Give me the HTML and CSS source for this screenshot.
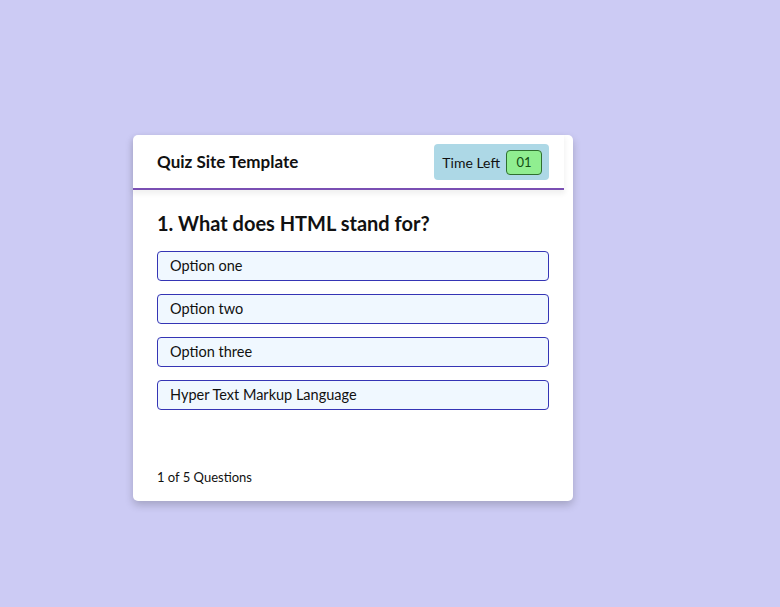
FILE: index.html
```html
<!DOCTYPE html>
<html lang="en">

<head>
    <meta charset="UTF-8">
    <meta name="viewport" content="width=device-width, initial-scale=1.0">
    <title>Quiz Site Template</title>
    <link rel="stylesheet" href="styles.css">
</head>

<body>
    <div class="quiz-box">
        <header class="quiz-header">
            <div class="title">Quiz Site Template</div>
            <div class="timer">
                <div class="time-text">Time Left</div>
                <div class="time-sec">01</div>
            </div>
        </header>
        <section class="quiz-body">
            <div class="que-text">1. What does HTML stand for?</div>
            <div class="option-list">
                <div class="option">Option one</div>
                <div class="option">Option two</div>
                <div class="option">Option three</div>
                <div class="option">Hyper Text Markup Language</div>
            </div>
        </section>
        <footer class="quiz-footer">
            <span><b>1</b> of <b>5</b> Questions</span>
        </footer>
    </div>
</body>

</html>
```

FILE: styles.css
```css
* {
    margin: 0;
    padding: 0;
    box-sizing: border-box;
}

body {
    background: #cccbf4;
    font-family: "Lato", "Open Sans", sans-serif;
    height: 607px;
    padding-top: 135px;
    padding-left: 133px;
}

.quiz-box {
    width: 440px;
    height: 366px;
    background: #fff;
    border-radius: 5px;
    box-shadow: 0 4px 8px rgba(0, 0, 0, 0.2);
    display: flex;
    flex-direction: column;
}

.quiz-header {
    width: 431px;
    height: 55px;
    padding: 0 15px 0 24px;
    display: flex;
    align-items: center;
    justify-content: space-between;
    border-bottom: 2px solid #7a4fb3;
    box-shadow: 0 3px 5px 1px rgba(0, 0, 0, 0.06);
}

.title {
    font-size: 17px;
    font-weight: bold;
    color: #111;
}

.timer {
    display: flex;
    align-items: center;
    gap: 6px;
    background: #add8e6;
    border-radius: 4px;
    height: 36px;
    padding: 0 7px 0 8px;
    margin-top: 1px;
}

.time-text {
    font-size: 14px;
    color: #111;
}

.time-sec {
    width: 36px;
    height: 25px;
    line-height: 23px;
    text-align: center;
    font-size: 13px;
    color: #124d12;
    background: #90ee90;
    border: 1px solid #2f6f2f;
    border-radius: 4px;
}

.quiz-body {
    padding: 20px 24px 0 24px;
    flex: 1;
}

.que-text {
    font-size: 20px;
    font-weight: bold;
    color: #111;
    line-height: 26px;
}

.option-list {
    margin-top: 15px;
    display: flex;
    flex-direction: column;
    gap: 13px;
}

.option {
    height: 30px;
    line-height: 28px;
    padding: 0 12px;
    font-size: 14.5px;
    color: #111;
    background: #f0f8ff;
    border: 1px solid #3535b5;
    border-radius: 4px;
}

.quiz-footer {
    padding: 0 24px 16px 24px;
    font-size: 13px;
    color: #111;
}

.quiz-footer b {
    font-weight: normal;
}
```
